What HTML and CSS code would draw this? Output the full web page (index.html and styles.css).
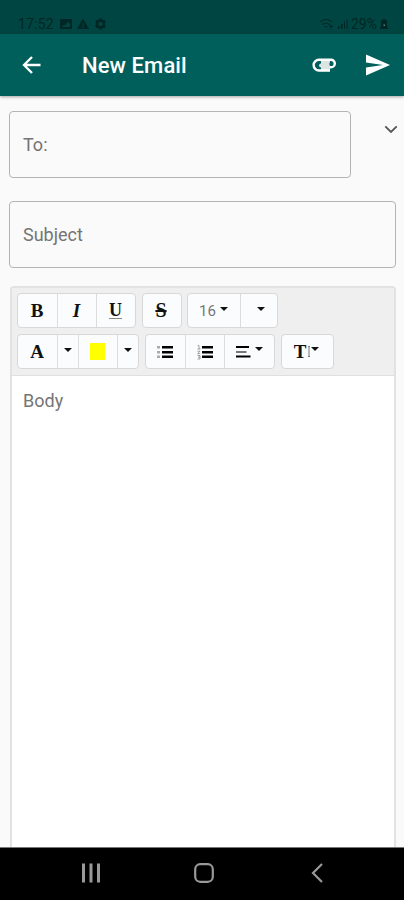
FILE: index.html
```html
<!DOCTYPE html>
<html lang="en">
<head>
  <meta charset="UTF-8" />
  <meta name="viewport" content="width=device-width, initial-scale=1.0" />
  <title>New Email</title>
  <link rel="stylesheet" href="styles.css">
</head>
<body>
  <div class="status-bar">
    <span class="clock">17:52</span>
    <svg class="status-icons" width="46" height="12" viewBox="0 0 46 12">
      <path fill-rule="evenodd" d="M0 1h12v10H0zM2 9h8V5.500L7.500 4 5.500 7.500 4 6.500z"/>
      <path fill-rule="evenodd" d="M23 .5L29 11H17zM22.300 5h1.400v2.500h-1.400zM22.300 8.500h1.400V10h-1.400z"/>
      <path fill-rule="evenodd" d="M39 .5h3l.6 1.800 2-.2 1.300 2.400L44.600 6l1.300 1.500-1.300 2.400-2-.2-.6 1.800h-3l-.6-1.800-2 .2-1.300-2.400L36.400 6l-1.300-1.500 1.300-2.400 2 .2zM40.500 3.800a2.200 2.200 0 1 0 0 4.400 2.200 2.200 0 0 0 0-4.400z"/>
    </svg>
    <svg class="signal" width="30" height="12" viewBox="0 0 30 12">
      <path class="wifi" d="M1 4q6-5 12 0M3 6.500q4-3 8 0M5.500 9q1.500-1 3 0M10 8.500h4m-2-2v4"/>
      <path d="M19 11V8h1.500v3zM22 11V6h1.500v5zM25 11V3.500h1V11zM27.500 11V1.500h1V11z"/>
    </svg>
    <span class="battery-text">29%</span>
    <svg class="battery" width="8" height="12" viewBox="0 0 8 12">
      <path d="M3 1h2v1h2v5l1 4H0l1-4V2h2z"/>
      <path class="charge" d="M3.500 6.500h1.500v1.500H3.500z"/>
    </svg>
  </div>

  <header class="app-bar">
    <svg class="back" width="20" height="20" viewBox="0 0 20 20">
      <path d="M18.500 10H2.500M10 2L2 10l8 8"/>
    </svg>
    <h1>New Email</h1>
    <svg class="attach" width="24" height="16" viewBox="0 0 24 16">
      <path class="clip-fill" d="M9 2h9v12H9z"/>
      <path class="clip" d="M18 13.500H7a5.400 5.400 0 0 1 0-10.800h12a3.800 3.800 0 0 1 0 7.600h-1"/>
      <path class="clip-dot" d="M17.500 5.500h1.500a1.500 1.500 0 0 1 0 3h-1.500z"/>
      <circle class="clip-end" cx="9" cy="8.500" r="2"/>
    </svg>
    <svg class="send" width="24" height="22" viewBox="0 0 24 22">
      <path d="M0 .5L24 11 0 21.500v-8L17 11 0 8.500z"/>
    </svg>
  </header>

  <main>
    <div class="recipient">
      <div class="field">To:</div>
      <svg class="expand" width="14" height="9" viewBox="0 0 14 9">
        <path d="M1.300 1.300L7 7l5.700-5.700"/>
      </svg>
    </div>
    <div class="field subject">Subject</div>

    <div class="editor">
      <div class="toolbar">
        <div class="row">
          <div class="group">
            <span class="btn"><b>B</b></span>
            <span class="btn"><b><i>I</i></b></span>
            <span class="btn"><span class="underline">U</span></span>
          </div>
          <div class="group">
            <span class="btn single"><span class="strike">S</span></span>
          </div>
          <div class="group">
            <span class="btn size">16 <span class="caret"></span></span>
            <span class="btn line"><span class="caret"></span></span>
          </div>
        </div>
        <div class="row">
          <div class="group">
            <span class="btn"><b>A</b></span>
            <span class="btn drop"><span class="caret"></span></span>
            <span class="btn"><span class="swatch"></span></span>
            <span class="btn drop"><span class="caret"></span></span>
          </div>
          <div class="group">
            <span class="btn">
              <svg width="16" height="14" viewBox="0 0 16 14">
                <path d="M5 1h11v2.500H5zM5 6h11v2.500H5zM5 10.500h11V13H5z"/>
                <path class="soft" d="M0 1h3v2.500H0zM0 6h3v2.500H0zM0 10.500h3V13H0z"/>
              </svg>
            </span>
            <span class="btn">
              <svg width="16" height="16" viewBox="0 0 16 16">
                <path d="M5 2h11v2.500H5zM5 7h11v2.500H5zM5 11.500h11V14H5z"/>
                <path class="digits" d="M.8 1.500h1.200V5M.5 5h3M.5 7.200h2.300L.7 9.700h2.500M.5 11.500h2.500v3.500H.5M1 13.200h2"/>
              </svg>
            </span>
            <span class="btn align">
              <svg width="15" height="14" viewBox="0 0 15 14">
                <path d="M0 1h13v2H0zM0 10.500h14.500v2H0z"/>
                <path class="mid" d="M0 6h10.500v2H0z"/>
              </svg>
              <span class="caret"></span>
            </span>
          </div>
          <div class="group">
            <span class="btn height">
              <b>T</b>
              <svg width="4" height="13" viewBox="0 0 4 13">
                <path class="arrow" d="M2 1v11M1 2L2 1l1 1M1 11l1 1 1-1"/>
              </svg>
              <span class="caret"></span>
            </span>
          </div>
        </div>
      </div>
      <div class="body-text">Body</div>
    </div>
  </main>

  <nav class="nav-bar">
    <svg class="recents" width="20" height="20" viewBox="0 0 20 20"><path d="M2.500 .5v19M10 .5v19M17.500 .5v19"/></svg>
    <svg width="20" height="20" viewBox="0 0 20 20"><rect x="1.200" y="1.200" width="17.600" height="17.600" rx="5"/></svg>
    <svg width="20" height="20" viewBox="0 0 20 20"><path d="M15 1L6 10l9 9"/></svg>
  </nav>
</body>
</html>
```

FILE: styles.css
```css
* {
  box-sizing: border-box;
}
body {
  margin: 0;
  height: 900px;
  display: flex;
  flex-direction: column;
  overflow: hidden;
  background: #fafafa;
  font-family: Roboto, sans-serif;
}
svg {
  display: block;
  flex: none;
}
.status-bar {
  height: 34px;
  flex: none;
  display: flex;
  align-items: center;
  padding: 13px 16px 0 18px;
  background: #004541;
  color: #002725;
  fill: #002725;
  font-size: 14px;
}
.clock {
  width: 42px;
  letter-spacing: 0.2px;
}
.signal {
  margin-left: auto;
}
.wifi {
  fill: none;
  stroke: #002725;
}
.battery-text {
  margin: 0 1px 0 2px;
  width: 28px;
}
.charge {
  fill: #4b8580;
}
.app-bar {
  height: 62px;
  flex: none;
  display: flex;
  align-items: center;
  padding: 0 14px 0 22px;
  background: #005f5b;
  box-shadow: 0 1px 3px rgba(0,0,0,0.35);
}
.app-bar h1 {
  margin: 1px 0 0 40px;
  color: #fff;
  font-size: 22px;
  font-weight: 500;
  letter-spacing: 0.1px;
}
.back path {
  fill: none;
  stroke: #fff;
  stroke-width: 2.3;
}
.attach {
  margin-left: auto;
}
.clip-fill {
  fill: #dce5e3;
}
.clip {
  fill: none;
  stroke: #fff;
  stroke-width: 2.4;
}
.clip-dot {
  fill: #005f5b;
}
.clip-end {
  fill: #dce5e3;
}
.send {
  margin-left: 30px;
  fill: #fff;
}
main {
  flex: 1;
  min-height: 0;
  display: flex;
  flex-direction: column;
  padding: 15px 8px 0 9px;
}
.recipient {
  display: flex;
  align-items: flex-start;
  justify-content: space-between;
}
.recipient .field {
  width: 342px;
}
.field {
  height: 67px;
  flex: none;
  display: flex;
  align-items: center;
  padding: 0 13px 1px;
  border: 1.500px solid #b4b4b4;
  border-radius: 4px;
  color: #747474;
  font-size: 18px;
}
.subject {
  margin-top: 23px;
}
.expand {
  margin: 14px -2px 0 0;
  fill: none;
  stroke: #555;
  stroke-width: 1.8;
}
.editor {
  flex: 1;
  min-height: 0;
  margin: 18px 0 0 1px;
  border: 2px solid #e2e2e2;
  border-width: 2px 2px 0;
  border-radius: 4px 4px 0 0;
  background: #fff;
}
.toolbar {
  height: 88px;
  padding: 5px 0 0 5px;
  display: flex;
  flex-direction: column;
  gap: 6px;
  background: #efefef;
  border-bottom: 1px solid #e0e0e0;
}
.row {
  display: flex;
  gap: 6px;
}
.row:first-child {
  gap: 5.500px;
}
.group {
  display: flex;
  height: 35px;
  background: #fafcfd;
  border: 1px solid #d8d8d8;
  border-radius: 4px;
}
.btn {
  width: 39px;
  display: flex;
  align-items: center;
  justify-content: center;
  padding-right: 1px;
  color: #111;
  font-family: "Liberation Serif", serif;
  font-size: 19px;
}
.btn + .btn {
  border-left: 1px solid #dcdcdc;
}
.single {
  width: 38px;
}
.underline {
  border-bottom: 1px solid #888;
  font-weight: bold;
  font-size: 18px;
  line-height: 16px;
}
.strike {
  text-decoration: line-through;
  text-decoration-thickness: 2px;
  font-weight: bold;
  font-size: 20px;
}
.size {
  width: 52px;
  gap: 4px;
  color: #777;
  font-family: Roboto, sans-serif;
  font-size: 15px;
}
.line {
  width: 37px;
  padding-left: 4px;
}
.drop {
  width: 21px;
}
.caret {
  margin-top: -3px;
  border: 4px solid transparent;
  border-top-color: #111;
  border-bottom: 0;
}
.swatch {
  width: 15px;
  height: 17px;
  background: #ff0;
}
.soft {
  fill: #aaa;
}
.digits {
  fill: none;
  stroke: #888;
  stroke-width: 0.8;
}
.mid {
  fill: #777;
}
.align {
  width: 50px;
  gap: 4px;
}
.height {
  width: 51px;
  gap: 1px;
  padding-right: 2px;
}
.align .caret,
.height .caret {
  margin-top: -5px;
}
.height .caret {
  margin-left: -1px;
}
.arrow {
  fill: none;
  stroke: #777;
}
.body-text {
  padding: 14px 11px;
  color: #757575;
  font-size: 18px;
  line-height: 22px;
}
.nav-bar {
  height: 53px;
  flex: none;
  display: flex;
  justify-content: space-between;
  align-items: center;
  padding: 0 77px 2px 81px;
  background: #000;
  border-top: 1px solid #777;
}
.nav-bar svg {
  fill: none;
  stroke: #999;
  stroke-width: 2.2;
}
.nav-bar .recents {
  stroke-width: 3;
}
```
